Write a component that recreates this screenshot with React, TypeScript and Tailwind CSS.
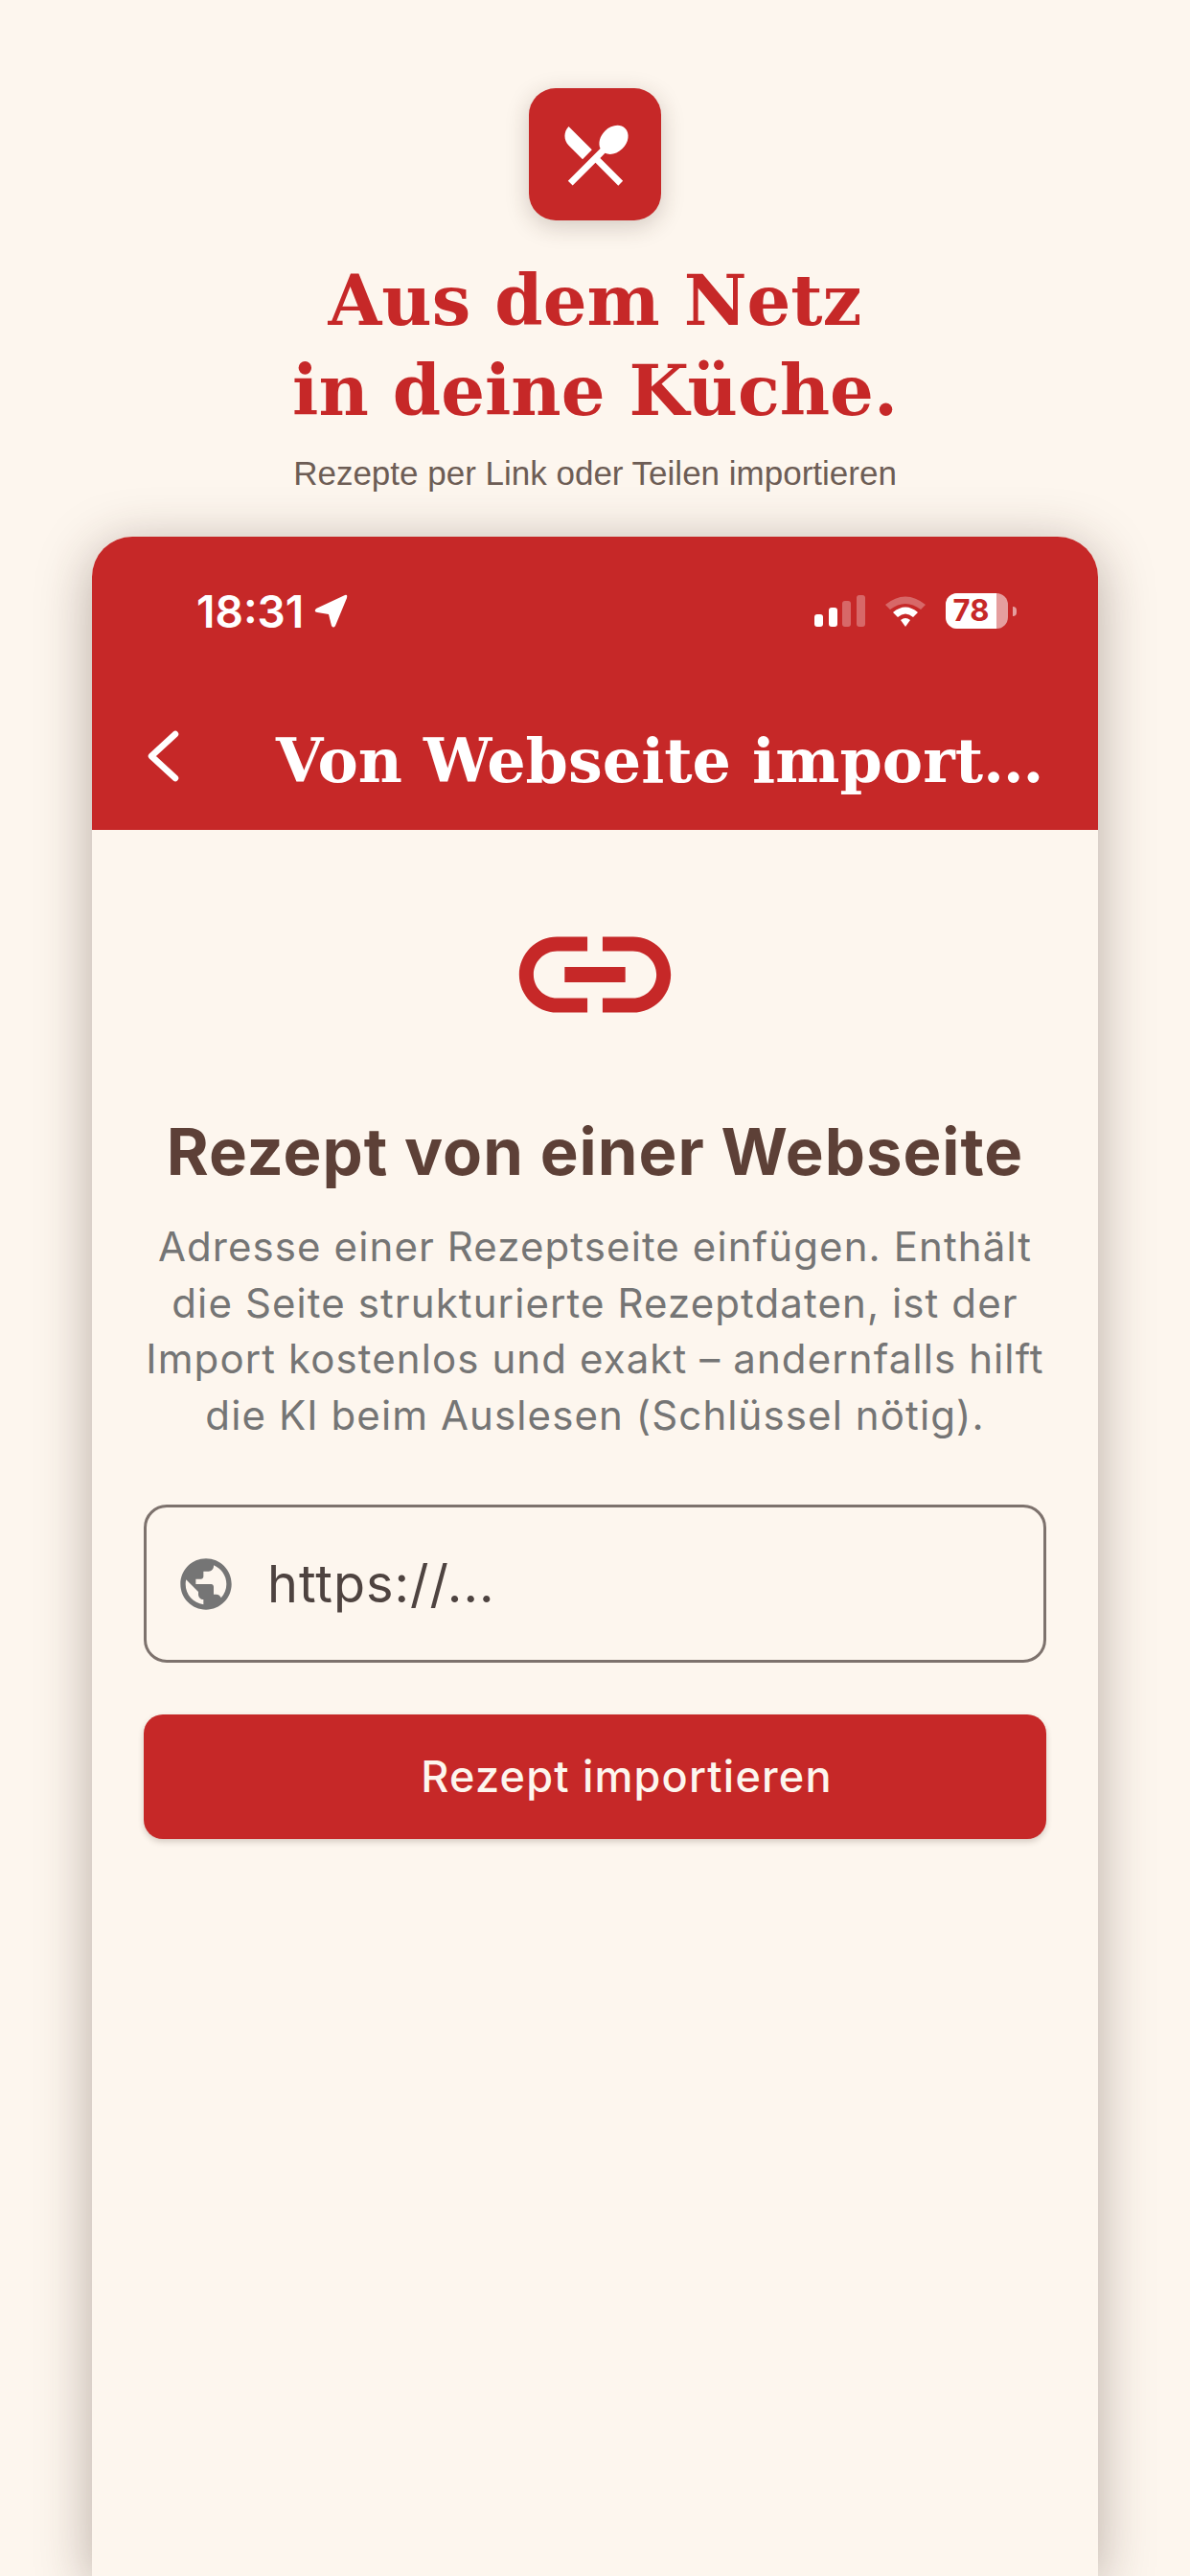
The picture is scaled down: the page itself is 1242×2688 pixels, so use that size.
export default function App() {
  return (
    <div className="h-[2688px] overflow-hidden bg-[#fdf6ee] flex flex-col items-center pt-[92px] font-['Inter',sans-serif]">
      {/* App logo */}
      <div className="w-[138px] h-[138px] shrink-0 rounded-[28px] bg-[#c62828] flex items-center justify-center shadow-[0_6px_24px_rgba(60,40,30,0.22)]">
        <svg width="83" height="83" viewBox="0 0 24 24" fill="#fff">
          <path d="M8.1 13.34l2.83-2.83L3.91 3.5c-1.56 1.56-1.56 4.09 0 5.66l4.19 4.18zm6.78-1.81c1.53.71 3.68.21 5.27-1.38 1.91-1.91 2.28-4.65.81-6.12-1.46-1.46-4.2-1.1-6.12.81-1.59 1.59-2.09 3.74-1.38 5.27L3.7 19.87l1.41 1.41L12 14.41l6.88 6.88 1.41-1.41L13.41 13l1.47-1.47z" />
        </svg>
      </div>

      {/* Headline */}
      <h1 className="mt-[37px] text-center font-['DejaVu_Serif',serif] font-bold text-[72px] leading-[94px] text-[#c62828]">
        Aus dem Netz
        <br />
        in deine Küche.
      </h1>
      <p className="mt-[17px] font-['Liberation_Sans',sans-serif] text-[35px] leading-[44px] text-[#6d5d55]">
        Rezepte per Link oder Teilen importieren
      </p>

      {/* Phone frame */}
      <div className="mt-[44px] w-[1050px] flex-1 rounded-t-[42px] bg-[#fdf6ee] shadow-[0_10px_56px_rgba(60,40,30,0.36)] overflow-hidden flex flex-col">
        <div className="bg-[#c62828] h-[306px] shrink-0 flex flex-col">
          {/* Status bar */}
          <div className="h-[156px] pt-[53px] pl-[109px] pr-[85px] flex items-start justify-between">
            <div className="flex items-center gap-[10px]">
              <span className="text-[46px] leading-[50px] font-semibold text-white">18:31</span>
              <svg width="36" height="36" viewBox="0 0 36 36" fill="#fff">
                <path d="M33 1 L3 15 Q0 18 4 19 L16 21 L19 33 Q21 36 23 33 L35 4 Q36 0 33 1 Z" />
              </svg>
            </div>
            <div className="flex items-center pt-[6px]">
              <svg width="53" height="33" viewBox="0 0 53 33" fill="#fff">
                <rect x="0" y="20" width="9" height="13" rx="3" />
                <rect x="15" y="13" width="9" height="20" rx="3" />
                <rect x="29" y="6" width="9" height="27" rx="3" opacity="0.3" />
                <rect x="44" y="0" width="9" height="33" rx="3" opacity="0.3" />
              </svg>
              <svg className="ml-[20px]" width="44" height="33" viewBox="0 0 44 33" fill="#fff">
                <path d="M1 10 Q22 -7 43 10 L38 15 Q22 3 6 15 Z" opacity="0.3" />
                <path d="M9 18 Q22 7 35 18 L30 23 Q22 16 14 23 Z" />
                <path d="M17 26 Q22 22 27 26 L22 33 Z" />
              </svg>
              <div className="ml-[20px] w-[65px] h-[37px] rounded-[12px] bg-white/55 overflow-hidden">
                <div className="w-[53px] h-[37px] bg-white flex items-center justify-center text-[31px] font-bold text-[#c62828]">78</div>
              </div>
              <div className="ml-[5px] w-[4px] h-[10px] rounded-r-[4px] bg-white/55" />
            </div>
          </div>

          {/* App bar */}
          <div className="flex-1 flex items-center pl-[56px] pb-[4px]">
            <svg width="40" height="60" viewBox="0 0 40 60" fill="none" stroke="#fff" strokeWidth="6.5" strokeLinecap="round" strokeLinejoin="round">
              <path d="M31 7 L6 30 L31 53" />
            </svg>
            <span className="ml-[96px] mt-[9px] font-['DejaVu_Serif',serif] font-bold text-[63.5px] leading-[80px] text-white whitespace-nowrap">
              Von Webseite import…
            </span>
          </div>
        </div>

        {/* Page body */}
        <div className="flex-1 flex flex-col items-center px-[54px]">
          <svg className="mt-[56px]" width="190" height="190" viewBox="0 0 24 24" fill="#c62828">
            <path d="M3.9 12c0-1.71 1.39-3.1 3.1-3.1h4V7H7c-2.76 0-5 2.24-5 5s2.24 5 5 5h4v-1.9H7c-1.71 0-3.1-1.39-3.1-3.1zM8 13h8v-2H8v2zm9-6h-4v1.9h4c1.71 0 3.1 1.39 3.1 3.1s-1.39 3.1-3.1 3.1h-4V17h4c2.76 0 5-2.24 5-5s-2.24-5-5-5z" />
          </svg>
          <h2 className="mt-[52px] text-[67px] leading-[76px] font-bold tracking-[1px] text-[#5d4037] whitespace-nowrap">
            Rezept von einer Webseite
          </h2>
          <p className="mt-[32px] w-full text-center text-[42px] leading-[58.5px] tracking-[1.1px] text-[#757575] whitespace-nowrap">
            Adresse einer Rezeptseite einfügen. Enthält
            <br />
            die Seite strukturierte Rezeptdaten, ist der
            <br />
            Import kostenlos und exakt – andernfalls hilft
            <br />
            die KI beim Auslesen (Schlüssel nötig).
          </p>

          {/* URL field */}
          <div className="mt-[64px] w-full h-[165px] shrink-0 rounded-[24px] border-[3px] border-[#7d726d] flex items-center pl-[30px]">
            <svg width="64" height="64" viewBox="0 0 24 24" fill="#757575">
              <path d="M12 2C6.48 2 2 6.48 2 12s4.48 10 10 10 10-4.48 10-10S17.52 2 12 2zm-1 17.93c-3.95-.49-7-3.85-7-7.93 0-.62.08-1.21.21-1.79L9 15v1c0 1.1.9 2 2 2v1.93zm6.9-2.54c-.26-.81-1-1.39-1.9-1.39h-1v-3c0-.55-.45-1-1-1H8v-2h2c.55 0 1-.45 1-1V7h2c1.1 0 2-.9 2-2v-.41c2.93 1.19 5 4.06 5 7.41 0 2.08-.8 3.97-2.1 5.39z" />
            </svg>
            <span className="ml-[32px] text-[54px] leading-[64px] tracking-[1px] text-[#4e4340]">https://...</span>
          </div>

          {/* Import button */}
          <button className="mt-[54px] w-full h-[130px] shrink-0 rounded-[20px] bg-[#c62828] pl-[66px] text-center text-[45px] font-medium tracking-[1.2px] text-[#fdf6ee] shadow-[0_3px_6px_rgba(60,40,30,0.2)]">
            Rezept importieren
          </button>
        </div>
      </div>
    </div>
  );
}
